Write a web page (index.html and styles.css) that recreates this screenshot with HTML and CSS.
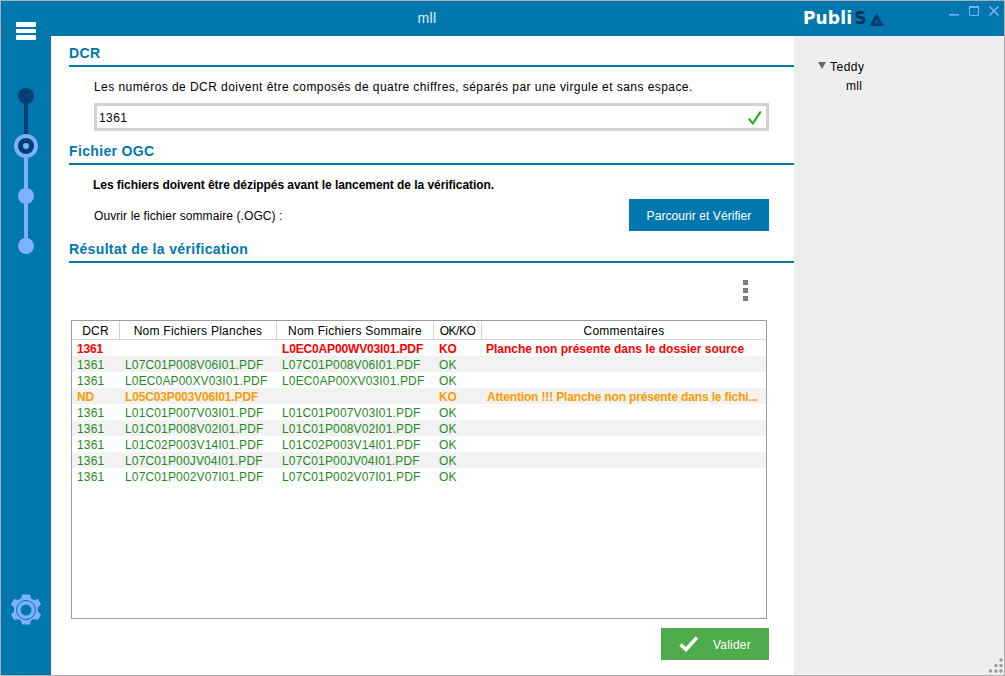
FILE: index.html
```html
<!DOCTYPE html>
<html lang="fr">
<head>
<meta charset="utf-8">
<title>PubliSA</title>
<link rel="stylesheet" href="styles.css">
</head>
<body>
<div class="window">
  <aside class="rail">
    <svg class="burger" width="20" height="18" viewBox="0 0 20 18"><rect x="0" y="0" width="20" height="5" rx="1"/><rect x="0" y="7" width="20" height="4" rx="1"/><rect x="0" y="13" width="20" height="5" rx="1"/></svg>
    <svg class="stepper" width="26" height="170" viewBox="0 0 26 170">
      <rect x="11" y="8" width="4" height="45" fill="#003f75"/>
      <rect x="11" y="60" width="4" height="100" fill="#7fb0ff"/>
      <circle cx="13" cy="8" r="8" fill="#003f75"/>
      <circle cx="13" cy="58" r="12" fill="#7fb0ff"/>
      <circle cx="13" cy="58" r="8" fill="#003f75"/>
      <circle cx="13" cy="58" r="3" fill="#7fb0ff"/>
      <circle cx="13" cy="108" r="8" fill="#7fb0ff"/>
      <circle cx="13" cy="158" r="8" fill="#7fb0ff"/>
    </svg>
    <svg class="gear" width="30" height="32" viewBox="0 0 30 32">
      <path fill="#7fb0ff" d="M11 0.5h8l1 4 3 1.600 4-1.200 3 5.600-3 2.800v4.400l3 2.800-3 5.600-4-1.200-3 1.600-1 4h-8l-1-4-3-1.600-4 1.200-3-5.600 3-2.800v-4.400l-3-2.800 3-5.600 4 1.200 3-1.600z"/>
      <circle cx="15" cy="16" r="9.500" fill="none" stroke="#0078ae" stroke-width="1"/>
      <circle cx="15" cy="16" r="5.500" fill="#0078ae"/>
    </svg>
  </aside>
  <div class="content">
    <header class="topbar">
      <div class="title">mll</div>
      <div class="logo"><span class="logo-white">Publi</span><span class="logo-dark">S</span><svg class="logo-a" width="15" height="13" viewBox="0 0 15 13"><path fill-rule="evenodd" fill="#003f75" d="M7.500 0L15 13H0zM7.500 7L6 9.500h3z"/></svg></div>
      <div class="controls">
        <svg width="10" height="10" viewBox="0 0 10 10"><rect x="0" y="8" width="10" height="1.500" fill="#7fb0ff"/></svg>
        <svg width="10" height="10" viewBox="0 0 10 10"><path fill="none" stroke="#7fb0ff" d="M.5 1.500h9v8h-9z"/><rect x="0" y="0" width="10" height="2" fill="#7fb0ff"/></svg>
        <svg width="10" height="10" viewBox="0 0 10 10"><path fill="none" stroke="#7fb0ff" stroke-width="1.500" d="M.5.500l9 9M9.500.500l-9 9"/></svg>
      </div>
    </header>
    <div class="body">
      <main class="main">
        <h2 class="head">DCR</h2>
        <p class="note">Les numéros de DCR doivent être composés de quatre chiffres, séparés par une virgule et sans espace.</p>
        <div class="input">
          <span>1361</span>
          <svg width="14" height="14" viewBox="0 0 14 14"><path fill="none" stroke="#0cb00c" stroke-width="2" d="M.8 7.500l4 5 8-12"/></svg>
        </div>
        <h2 class="head">Fichier OGC</h2>
        <p class="warn">Les fichiers doivent être dézippés avant le lancement de la vérification.</p>
        <div class="open-row">
          <span class="open-label">Ouvrir le fichier sommaire (.OGC) :</span>
          <button class="browse">Parcourir et Vérifier</button>
        </div>
        <h2 class="head">Résultat de la vérification</h2>
        <div class="tools"><div class="dots"><i></i><i></i><i></i></div></div>
        <div class="table-box">
          <table>
            <colgroup><col class="c1"><col class="c2"><col class="c2"><col class="c1"><col class="c3"></colgroup>
            <thead><tr><th>DCR</th><th>Nom Fichiers Planches</th><th>Nom Fichiers Sommaire</th><th>OK/KO</th><th>Commentaires</th></tr></thead>
            <tbody>
              <tr class="ko"><td>1361</td><td></td><td>L0EC0AP00WV03I01.PDF</td><td>KO</td><td>Planche non présente dans le dossier source</td></tr>
              <tr class="ok"><td>1361</td><td>L07C01P008V06I01.PDF</td><td>L07C01P008V06I01.PDF</td><td>OK</td><td></td></tr>
              <tr class="ok"><td>1361</td><td>L0EC0AP00XV03I01.PDF</td><td>L0EC0AP00XV03I01.PDF</td><td>OK</td><td></td></tr>
              <tr class="warnrow"><td>ND</td><td>L05C03P003V06I01.PDF</td><td></td><td>KO</td><td>Attention !!! Planche non présente dans le fichi...</td></tr>
              <tr class="ok"><td>1361</td><td>L01C01P007V03I01.PDF</td><td>L01C01P007V03I01.PDF</td><td>OK</td><td></td></tr>
              <tr class="ok"><td>1361</td><td>L01C01P008V02I01.PDF</td><td>L01C01P008V02I01.PDF</td><td>OK</td><td></td></tr>
              <tr class="ok"><td>1361</td><td>L01C02P003V14I01.PDF</td><td>L01C02P003V14I01.PDF</td><td>OK</td><td></td></tr>
              <tr class="ok"><td>1361</td><td>L07C01P00JV04I01.PDF</td><td>L07C01P00JV04I01.PDF</td><td>OK</td><td></td></tr>
              <tr class="ok"><td>1361</td><td>L07C01P002V07I01.PDF</td><td>L07C01P002V07I01.PDF</td><td>OK</td><td></td></tr>
            </tbody>
          </table>
        </div>
        <div class="actions">
          <button class="validate">
            <svg width="20" height="16" viewBox="0 0 20 16"><path fill="none" stroke="#fff" stroke-width="3.500" d="M1.500 8.500l5.500 5 11-12"/></svg>
            <span>Valider</span>
          </button>
        </div>
      </main>
      <aside class="panel">
        <div class="tree-root"><i class="caret"></i><span>Teddy</span></div>
        <div class="tree-leaf">mll</div>
      </aside>
    </div>
  </div>
  <svg class="grip" width="15" height="15" viewBox="0 0 15 15" fill="#999"><circle cx="13" cy="2" r="1.700"/><circle cx="8" cy="7.500" r="1.700"/><circle cx="13" cy="7.500" r="1.700"/><circle cx="2.500" cy="13" r="1.700"/><circle cx="8" cy="13" r="1.700"/><circle cx="13" cy="13" r="1.700"/></svg>
</div>
</body>
</html>
```
FILE: styles.css
```css
* { box-sizing: border-box; }
html, body { margin: 0; padding: 0; }
body { width: 1005px; height: 676px; overflow: hidden; font-family: "Liberation Sans", Arial, sans-serif; font-size: 12px; color: #000; }

.window { position: relative; display: flex; width: 1005px; height: 676px; border: 1px solid #b0b0b0; background: #fff; }

.rail { flex: 0 0 50px; display: flex; flex-direction: column; align-items: flex-start; background: #0078ae; }
.burger { fill: #fff; margin: 21px 0 0 15px; }
.stepper { margin: 48px 0 0 12px; }
.gear { margin: 336px 0 0 10px; }

.content { flex: 1; display: flex; flex-direction: column; min-width: 0; }

.topbar { flex: 0 0 35px; display: flex; align-items: flex-start; background: #0078ae; color: #fff; }
.title { width: 752px; padding: 9px 0 0 0; text-align: center; font-size: 14px; letter-spacing: 0.3px; color: #e4eef5; }
.logo { width: 146px; display: flex; align-items: flex-end; height: 16px; margin-top: 9px; font-family: "DejaVu Sans", sans-serif; font-weight: 700; font-size: 17px; line-height: 16px; }
.logo-white { color: #fff; letter-spacing: 0.15px; }
.logo-dark { color: #002f62; margin-left: 2px; }
.logo-a { margin-left: 3px; }
.controls { display: flex; gap: 10px; margin-top: 5px; }

.body { flex: 1; display: flex; min-height: 0; }
.main { flex: 0 0 743px; padding-bottom: 0; }
.panel { flex: 1; background: #eeeeee; padding-top: 20px; font-size: 12px; }
.tree-root { display: flex; align-items: center; height: 20px; padding: 1px 0 0 24px; letter-spacing: 0.5px; }
.caret { width: 0; height: 0; border-left: 4px solid transparent; border-right: 4px solid transparent; border-top: 7px solid #666; margin-right: 4px; margin-top: -2px; }
.tree-leaf { height: 20px; line-height: 20px; padding-left: 52px; letter-spacing: 0.3px; }

.head { margin: 0 0 0 18px; height: 31px; padding-top: 8px; border-bottom: 2px solid #0078ae; color: #0078ae; font-size: 14px; line-height: 18px; font-weight: 700; letter-spacing: 0.35px; }
.head + .note, .head + .warn { margin-top: 10px; }
.note { margin: 0 0 0 43px; height: 20px; line-height: 20px; letter-spacing: 0.44px; }
.input { display: flex; align-items: center; justify-content: space-between; margin: 6px 25px 3px 43px; height: 28px; padding: 1px 4px 0 2px; border: 3px solid #d2d2d2; letter-spacing: 0.4px; }
.warn { margin: 0 0 0 42px; height: 20px; line-height: 20px; font-weight: 700; letter-spacing: -0.05px; }
.open-row { display: flex; align-items: center; justify-content: space-between; margin: 4px 25px 1px 43px; height: 32px; }
.open-label { padding-top: 2px; letter-spacing: 0.09px; }
.browse { width: 140px; height: 32px; padding: 1px 0 0; border: 0; background: #0078ae; color: #fff; font: 12px "Liberation Sans", Arial, sans-serif; letter-spacing: 0.07px; }

.tools { display: flex; justify-content: flex-end; height: 57px; padding: 17px 46px 0 0; }
.dots { display: flex; flex-direction: column; gap: 3px; }
.dots i { display: block; width: 5px; height: 5px; background: #808080; }

.table-box { margin-left: 20px; width: 696px; height: 299px; border: 1px solid #9a9ea6; }
table { border-collapse: separate; border-spacing: 0; table-layout: fixed; width: 694px; font-size: 12px; }
.c1 { width: 48px; }
.c2 { width: 157px; }
.c3 { width: 284px; }
th { height: 19px; padding: 1px 0 0; font-weight: 400; text-align: center; border-right: 1px solid #d2d2d2; border-bottom: 1px solid #d2d2d2; letter-spacing: 0.25px; white-space: nowrap; }
th:nth-child(4) { letter-spacing: -0.5px; }
th:last-child { border-right: 0; }
td { height: 16px; padding: 2px 0 0 5px; line-height: 14px; white-space: nowrap; overflow: hidden; letter-spacing: 0.15px; }
td:last-child { padding-left: 4px; }
tbody tr:nth-child(even) { background: #f2f2f2; }
.ok td { color: #1f8a1f; }
.ko td { color: #ff0000; font-weight: 700; letter-spacing: -0.15px; }
.ko td:last-child { letter-spacing: 0; }
.warnrow td { color: #ff9a00; font-weight: 700; letter-spacing: -0.15px; }
.warnrow td:last-child { padding-left: 5px; }

.actions { display: flex; justify-content: flex-end; margin: 9px 25px 0 0; }
.validate { display: flex; align-items: center; width: 108px; height: 32px; padding: 1px 0 0 18px; border: 0; background: #4fac4b; color: #fff; font: 12px "Liberation Sans", Arial, sans-serif; letter-spacing: 0.2px; }
.validate span { margin-left: 14px; }
.validate svg { margin-top: -1px; }

.grip { position: absolute; right: 1px; bottom: 2px; }
```
